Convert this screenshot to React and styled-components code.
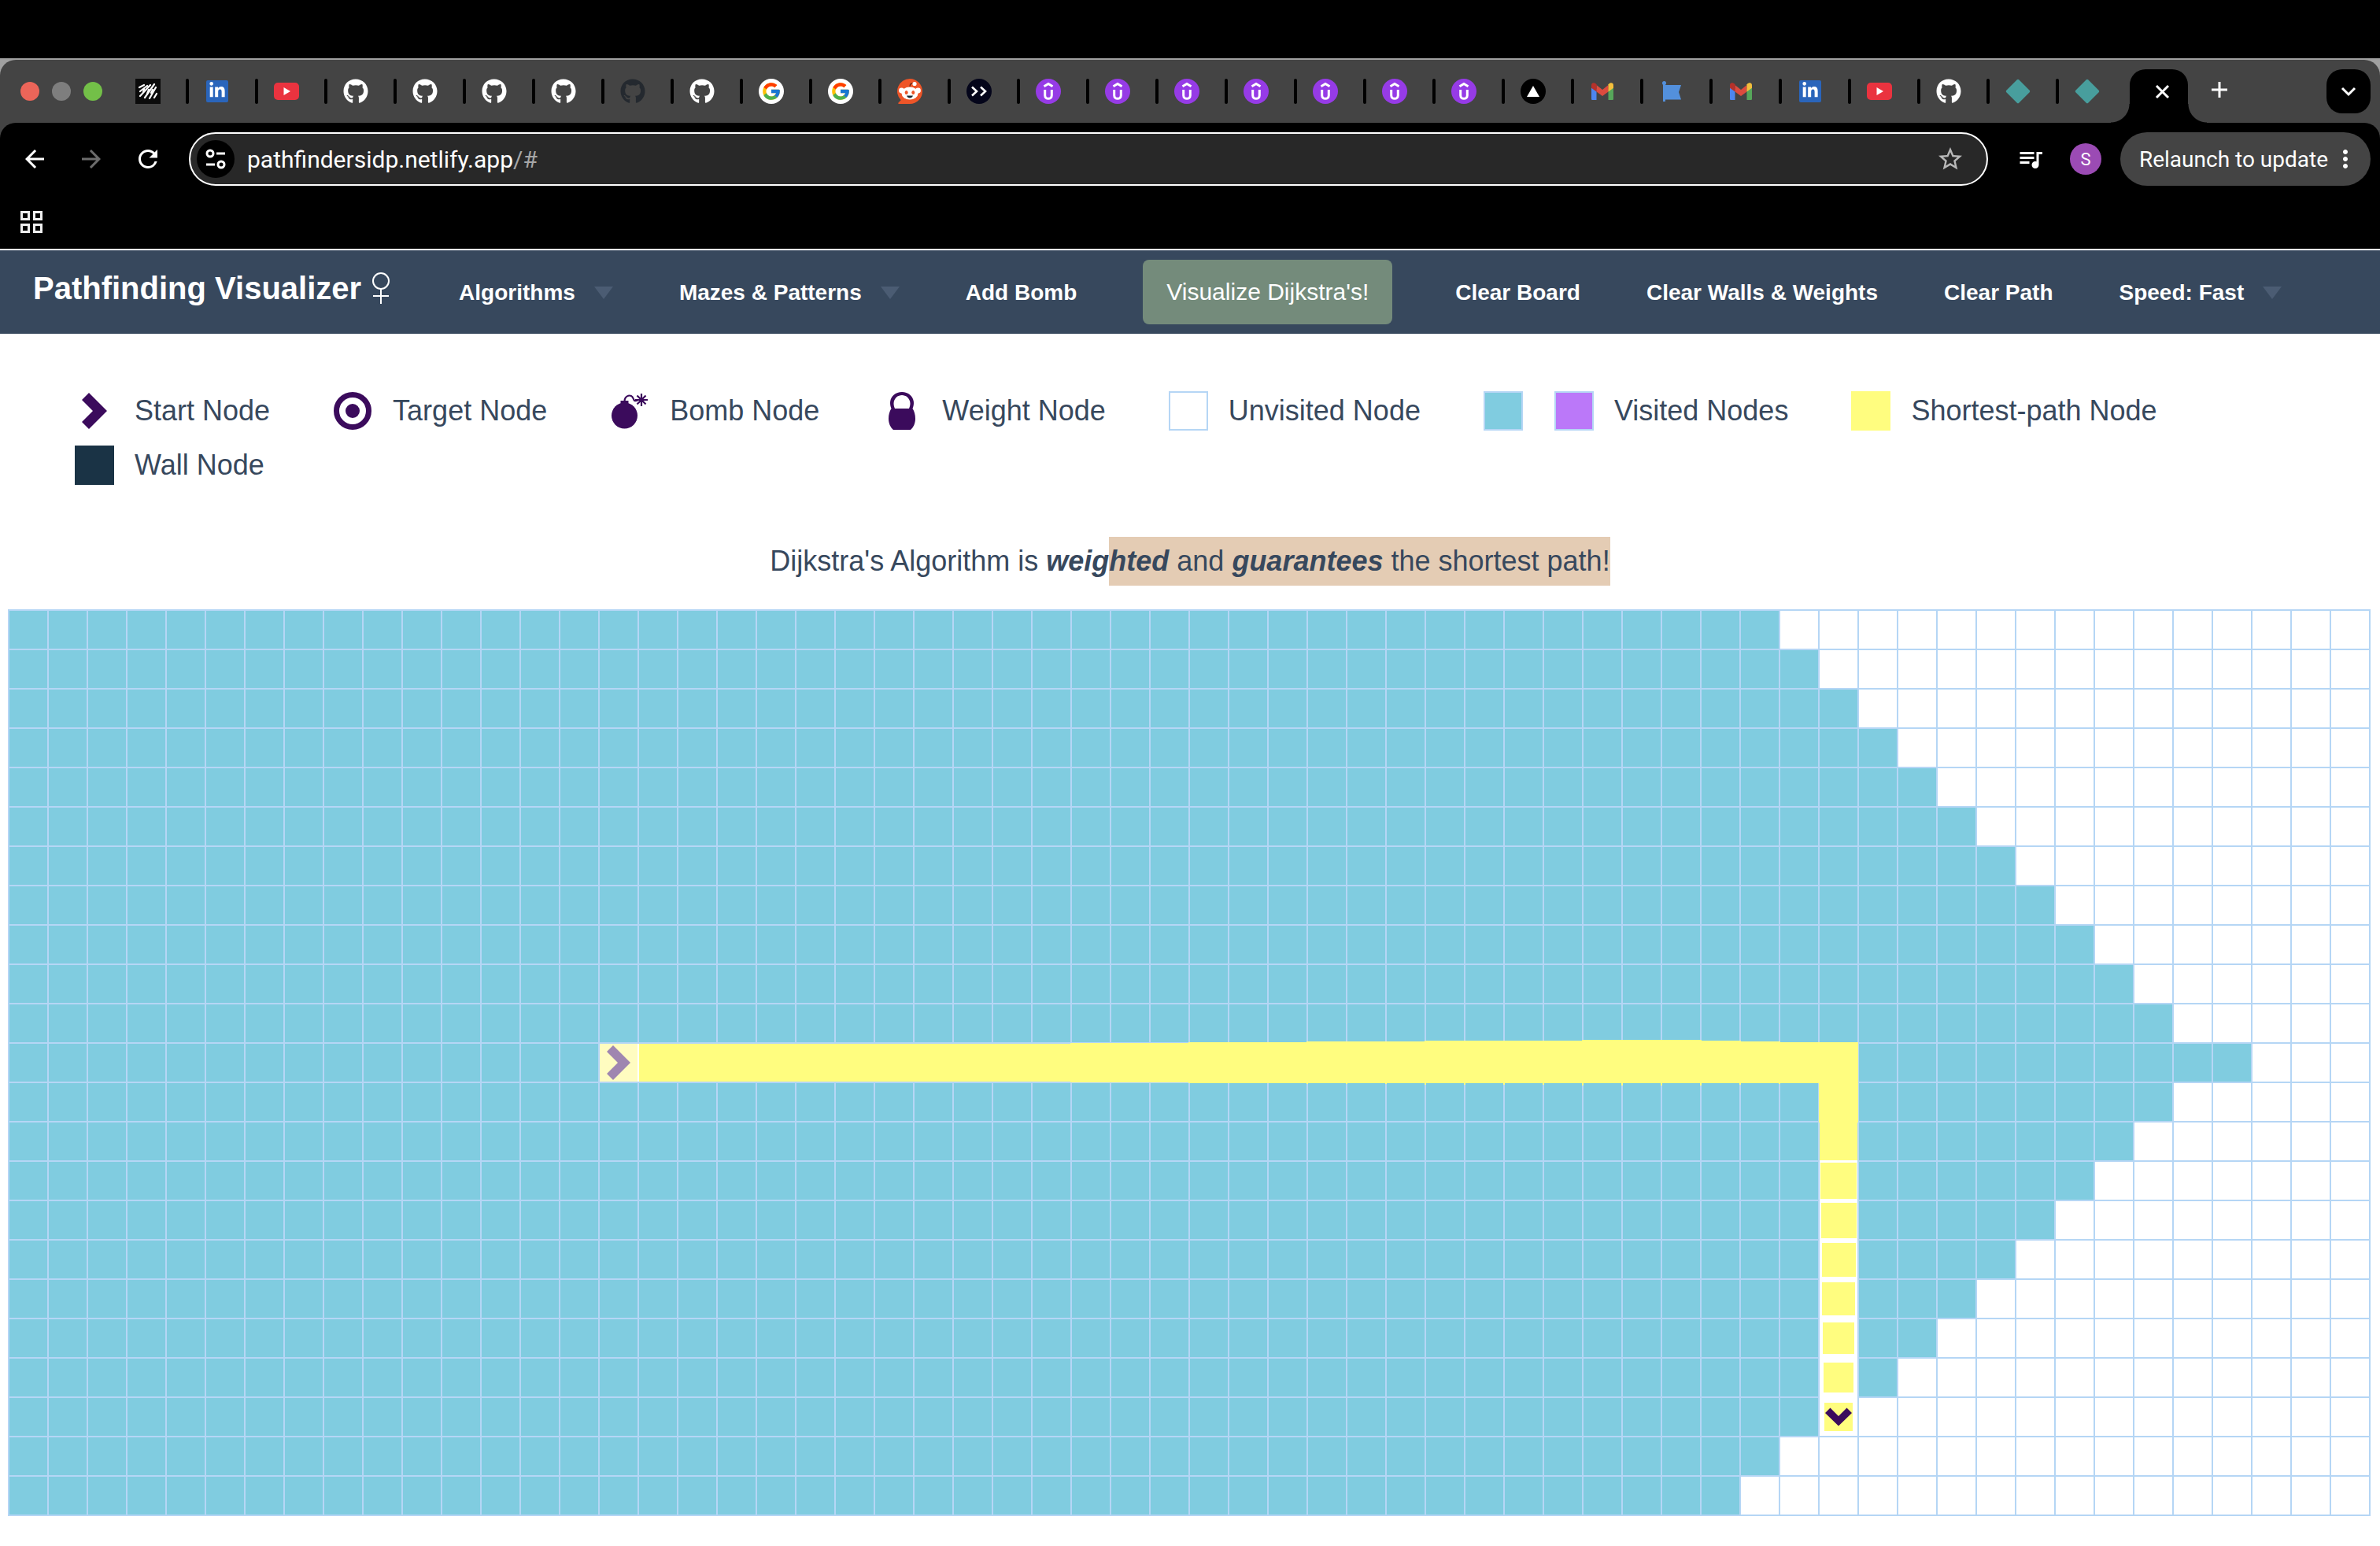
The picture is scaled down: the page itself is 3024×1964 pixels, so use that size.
import React from "react";
import styled, { createGlobalStyle, css } from "styled-components";
import { FaGithub, FaLinkedinIn } from "react-icons/fa";
import { FcGoogle } from "react-icons/fc";
import {
  MdArrowBack,
  MdArrowForward,
  MdRefresh,
  MdStarBorder,
  MdQueueMusic,
  MdMoreVert,
} from "react-icons/md";

const color = {
  strip: "#444444",
  navy: "#37485d",
  ink: "#37485d",
  line: "#b5d6f5",
  visited: "#80cce0",
  visitedAlt: "#bb78f9",
  path: "#fffd7f",
  wall: "#1a3345",
  node: "#3b0b5c",
};

const GlobalStyle = createGlobalStyle`
  *, *::before, *::after { box-sizing: border-box; }
  body {
    margin: 0;
    background: #fff;
    color: ${color.ink};
    font-family: "Liberation Sans", Arial, sans-serif;
  }
  button { font: inherit; color: inherit; background: none; border: 0; padding: 0; cursor: pointer; }
  a { color: inherit; text-decoration: none; }
  svg { display: block; flex: none; }
`;

/* ---------- browser window ---------- */

const Browser = styled.header`
  background: #000;
  padding-top: 74px;
  border-bottom: 2px solid #fff;
  font-family: Roboto, Inter, sans-serif;
`;

const WindowEdge = styled.div`
  background: #a0a0a0;
  padding-top: 2px;
`;

const TabStrip = styled.div`
  display: flex;
  align-items: center;
  height: 80px;
  padding: 0 12px 0 26px;
  background: ${color.strip};
  border-radius: 20px 20px 0 0;
`;

const Lights = styled.div`
  display: flex;
  gap: 16px;
  margin-right: 42px;
`;

const Light = styled.button`
  width: 24px;
  height: 24px;
  border-radius: 50%;
  background: ${(p) => p.$fill};
`;

const Tabs = styled.nav`
  display: flex;
  align-items: center;
  align-self: stretch;
`;

const Tab = styled.a`
  display: flex;
  align-items: center;
  width: 88px;

  &:not(:nth-last-child(2))::after {
    content: "";
    width: 4px;
    height: 32px;
    margin-left: 32px;
    border-radius: 2px;
    background: #000;
  }
`;

const ActiveTab = styled.div`
  position: relative;
  display: flex;
  align-items: center;
  justify-content: flex-end;
  align-self: flex-end;
  width: 74px;
  height: 68px;
  margin-left: -18px;
  padding: 0 18px 12px 0;
  background: #000;
  border-radius: 20px 20px 0 0;

  &::before,
  &::after {
    content: "";
    position: absolute;
    bottom: 0;
    width: 24px;
    height: 24px;
  }
  &::before {
    right: 100%;
    background: radial-gradient(circle at 0 0, transparent 23px, #000 24px);
  }
  &::after {
    left: 100%;
    background: radial-gradient(circle at 100% 0, transparent 23px, #000 24px);
  }
`;

const NewTab = styled.button`
  display: flex;
  margin-left: 28px;
`;

const TabSearch = styled.button`
  display: grid;
  place-items: center;
  width: 56px;
  height: 56px;
  margin-left: auto;
  border-radius: 20px;
  background: #000;
`;

const Disc = styled.span`
  display: grid;
  place-items: center;
  width: 32px;
  height: 32px;
  border-radius: ${(p) => p.$radius || "50%"};
  background: ${(p) => p.$fill};
  color: #fff;
`;

const ToolbarBack = styled.div`
  background: ${color.strip};
`;

const Toolbar = styled.div`
  display: flex;
  align-items: center;
  padding: 12px 12px;
  background: #000;
  border-radius: 20px 20px 0 0;
`;

const NavButtons = styled.div`
  display: flex;
  gap: 36px;
  margin: 0 34px 0 14px;
  color: #fff;
`;

const IconButton = styled.button`
  display: flex;
  color: ${(p) => p.$tint || "#fff"};
`;

const Omnibox = styled.form`
  display: flex;
  align-items: center;
  flex: 1;
  height: 68px;
  padding: 0 28px 0 8px;
  border: 2px solid #fff;
  border-radius: 34px;
  background: #282828;
  font-size: 30px;
`;

const SiteInfo = styled.button`
  display: grid;
  place-items: center;
  width: 48px;
  height: 48px;
  margin-right: 16px;
  border-radius: 50%;
  background: #000;
`;

const Address = styled.input`
  field-sizing: content;
  padding: 0;
  border: 0;
  outline: 0;
  background: none;
  color: #fff;
  font: inherit;
`;

const AddressTail = styled.span`
  flex: 1;
  color: #a6a6a6;
`;

const Extras = styled.div`
  display: flex;
  align-items: center;
  gap: 32px;
  margin: 0 24px 0 36px;
`;

const Avatar = styled.button`
  width: 40px;
  height: 40px;
  border-radius: 50%;
  background: #9b4bb4;
  color: #fff;
  font-size: 22px;
`;

const Relaunch = styled.button`
  display: flex;
  align-items: center;
  gap: 4px;
  height: 68px;
  padding: 0 14px 0 24px;
  border-radius: 34px;
  background: ${color.strip};
  color: #fff;
  font-size: 28px;
  white-space: nowrap;
`;

const Bookmarks = styled.div`
  display: flex;
  align-items: center;
  height: 68px;
  padding: 0 26px;
`;

/* ---------- page ---------- */

const Navbar = styled.nav`
  display: flex;
  align-items: center;
  min-height: 106px;
  padding: 0 42px;
  background: ${color.navy};
  color: #fff;
`;

const Brand = styled.a`
  display: flex;
  align-items: center;
  gap: 14px;
  margin-right: 88px;
  padding-bottom: 10px;
  font-size: 40px;
  line-height: 44px;
  font-weight: 700;
  white-space: nowrap;
`;

const Menu = styled.ul`
  display: flex;
  align-items: center;
  gap: 84px;
  margin: 0;
  padding: 0;
  list-style: none;
  font-size: 28px;
  white-space: nowrap;
`;

const MenuButton = styled.button`
  display: flex;
  align-items: center;
  gap: 24px;
  padding-top: 2px;
  font-weight: 700;
`;

const Caret = styled.span`
  border: solid transparent;
  border-width: 16px 12px 0;
  border-top-color: #4b5c73;
`;

const VisualizeButton = styled.button`
  height: 82px;
  margin-right: -4px;
  padding: 0 30px;
  border-radius: 8px;
  background: #748b7b;
  font-size: 30px;
`;

const Legend = styled.ul`
  display: flex;
  flex-wrap: wrap;
  gap: 19px 80px;
  margin: 0;
  padding: 73px 95px 66px;
  list-style: none;
  font-size: 36px;
`;

const LegendItem = styled.li`
  display: flex;
  align-items: center;
  gap: 26px;
  height: 50px;
  white-space: nowrap;
`;

const Swatches = styled.span`
  display: flex;
  gap: 40px;
`;

const Swatch = styled.span`
  width: 50px;
  height: 50px;
  background: ${(p) => p.$fill};
  ${(p) => p.$outlined && css`border: 2px solid ${color.line};`}
`;

const Description = styled.p`
  margin: 0 0 30px;
  font-size: 36px;
  line-height: 62px;
  text-align: center;

  i { font-weight: 700; }
`;

const Selected = styled.mark`
  padding: 10px 0 11px;
  background: #e4ccb4;
  color: inherit;
`;

const Board = styled.div`
  display: grid;
  grid-template-columns: repeat(60, 48px);
  grid-auto-rows: 48px;
  gap: 2px;
  width: max-content;
  margin: 0 0 36px 10px;
  padding: 2px;
  background: ${color.line};
`;

const cellKinds = {
  open: css`background: #fff;`,
  visited: css`background: ${color.visited};`,
  start: css`background: #fffcc0; box-shadow: 2px 0 0 #fff;`,
  across: css`background: ${color.path};`,
  down: css`background: #fff; box-shadow: 0 -2px 0 #fff;`,
};

const Cell = styled.div`
  display: flex;
  align-items: center;
  justify-content: center;
  ${(p) => cellKinds[p.$kind]}
`;

const PathFill = styled.span`
  display: grid;
  place-items: center;
  flex: none;
  width: ${(p) => p.$w}px;
  height: ${(p) => p.$h}px;
  background: ${color.path};
`;

/* ---------- favicons ---------- */

const Scribble = () => (
  <Disc $fill="#0b0b0b" $radius="0">
    <svg width="24" height="20" viewBox="0 0 24 20" fill="none" stroke="#fff" strokeWidth="2.2" strokeLinecap="round" strokeLinejoin="round">
      <path d="M1 5 7 2M2 10l9-7M2 16 15 2M8 18 20 1M14 19l8-14M20 18l3-5" />
      <path d="M6 11l1-4M11 13l2-5M16 12l2-4" />
    </svg>
  </Disc>
);

const LinkedIn = () => (
  <svg width="32" height="32" viewBox="0 0 32 32">
    <rect x="2" y="2" width="28" height="28" rx="2" fill="#2a65bb" />
    <FaLinkedinIn x="5" y="4" size={22} color="#fff" />
  </svg>
);

const YouTube = () => (
  <svg width="32" height="32" viewBox="0 0 32 32">
    <rect y="5" width="32" height="22" rx="5" fill="#ea333f" />
    <path d="M12.500 11v10l8.500-5z" fill="#fff" />
  </svg>
);

const GitHub = () => <FaGithub size={32} color="#fff" />;
const GitHubDark = () => <FaGithub size={32} color="#24292f" />;

const Google = () => (
  <Disc $fill="#fff">
    <FcGoogle size={26} />
  </Disc>
);

const Reddit = () => (
  <svg width="32" height="32" viewBox="0 0 32 32">
    <path d="M16 0a16 16 0 1 1 0 32H2.500c-1.500 0-1.500-1-.8-1.800L4.700 27.300A16 16 0 0 1 16 0z" fill="#ee5528" />
    <path d="M16 10c.3-4 2-4.500 4.500-4" stroke="#5c2312" strokeWidth="1.200" fill="none" />
    <circle cx="22" cy="6.500" r="2.600" fill="#fff" />
    <circle cx="5.500" cy="15" r="3.400" fill="#fff" />
    <circle cx="26.500" cy="15" r="3.400" fill="#fff" />
    <ellipse cx="16" cy="18.500" rx="10.500" ry="8" fill="#fff" />
    <ellipse cx="11.700" cy="17.500" rx="2" ry="2.500" fill="#ee5528" />
    <ellipse cx="20.300" cy="17.500" rx="2" ry="2.500" fill="#ee5528" />
    <path d="M12 21.500h8c-.6 2-2.200 3-4 3s-3.400-1-4-3z" fill="#1b2a33" />
  </svg>
);

const Fast = () => (
  <Disc $fill="#04051a">
    <svg width="22" height="14" viewBox="0 0 22 14" fill="none" stroke="#fff" strokeWidth="2.600">
      <path d="m2 1.500 6 5.500-6 5.500M13 1.500 19 7l-6 5.500" />
    </svg>
  </Disc>
);

const Udemy = () => (
  <Disc $fill="#963be6">
    <svg width="32" height="32" viewBox="0 0 32 32" fill="none" stroke="#fff" strokeWidth="3">
      <path d="m10.500 9.700 5.500-3.300 5.500 3.300" />
      <path d="M11.700 14v7.200c0 5.400 8.600 5.400 8.600 0V14" />
    </svg>
  </Disc>
);

const Vercel = () => (
  <Disc $fill="#000">
    <svg width="16" height="14" viewBox="0 0 16 14">
      <path d="m8 0 8 14H0z" fill="#fff" />
    </svg>
  </Disc>
);

const Gmail = () => (
  <svg width="32" height="32" viewBox="0 0 32 32">
    <path d="M2 9v16.500c0 1 .6 1.500 1.500 1.500H8.500V13z" fill="#4d86f0" />
    <path d="M30 9v16.500c0 1-.6 1.500-1.500 1.500h-5V13z" fill="#56a65a" />
    <path d="m8.500 8 7.500 6 7.500-6v8.500L16 22l-7.500-5.500z" fill="#dd4b3e" />
    <path d="M2 8.500C2 5 5.500 4.200 8.500 7.200v9.300L2 11.700z" fill="#b5312a" />
    <path d="M30 8.500c0-3.500-3.500-4.300-6.500-1.300v9.300l6.500-4.800z" fill="#f3bf3c" />
  </svg>
);

const Flag = () => (
  <svg width="32" height="32" viewBox="0 0 32 32" fill="#5390dc">
    <circle cx="6.500" cy="5.500" r="2.500" />
    <path d="M5 5h3v24H5z" />
    <path d="M7 8h21l-3 9 3 9.500H7z" />
  </svg>
);

const Netlify = () => (
  <svg width="32" height="32" viewBox="0 0 32 32">
    <path d="m14.800 1.300-13.500 13.500a1.700 1.700 0 0 0 0 2.400l13.500 13.500a1.700 1.700 0 0 0 2.400 0l13.500-13.500a1.700 1.700 0 0 0 0-2.400l-13.500-13.500a1.700 1.700 0 0 0-2.400 0z" fill="#489e9d" />
  </svg>
);

const repeat = (n, item) => Array.from({ length: n }, () => item);

const tabs = [
  ["Notes", Scribble],
  ["LinkedIn", LinkedIn],
  ["YouTube", YouTube],
  ...repeat(4, ["GitHub", GitHub]),
  ["GitHub", GitHubDark],
  ["GitHub", GitHub],
  ...repeat(2, ["Google", Google]),
  ["Reddit", Reddit],
  ["Arrows", Fast],
  ...repeat(7, ["Udemy", Udemy]),
  ["Vercel", Vercel],
  ["Gmail", Gmail],
  ["Flag", Flag],
  ["Gmail", Gmail],
  ["LinkedIn", LinkedIn],
  ["YouTube", YouTube],
  ["GitHub", GitHub],
  ...repeat(2, ["Netlify", Netlify]),
];

/* ---------- node icons ---------- */

const StartIcon = () => (
  <svg width="50" height="50" viewBox="0 0 50 50">
    <path d="M18 2 9 11l14 14L9 39l9 9 23-23z" fill={color.node} />
  </svg>
);

const TargetIcon = () => (
  <svg width="50" height="50" viewBox="0 0 50 50">
    <circle cx="25" cy="25" r="20.500" fill="none" stroke={color.node} strokeWidth="7" />
    <circle cx="25" cy="25" r="9" fill={color.node} />
  </svg>
);

const BombIcon = () => (
  <svg width="50" height="50" viewBox="0 0 50 50" fill={color.node}>
    <circle cx="18.500" cy="31" r="16.500" />
    <path d="M13.500 12h10v6h-10z" />
    <path
      d="M18.500 13c0-8 9-10 11-4 1 3 2 4 6 2.500M32 11h16M40 3v16M34.500 5.500l11 11M45.500 5.500l-11 11"
      fill="none"
      stroke={color.node}
      strokeWidth="2.200"
    />
  </svg>
);

const WeightIcon = () => (
  <svg width="50" height="50" viewBox="0 0 50 50" fill={color.node}>
    <path
      d="M25 1c9 0 15 6.500 15 14 0 3-.8 5-1.500 7 2.300 3.500 3.500 8 3.500 13 0 6-2.500 11-6 14H14c-3.500-3-6-8-6-14 0-5 1.200-9.500 3.500-13-.7-2-1.500-4-1.500-7C10 7.500 16 1 25 1zm0 4c-6 0-10.500 5-10.500 10.500 0 2.500.7 4.500 1.500 6.500h18c.8-2 1.500-4 1.500-6.500C35.500 10 31 5 25 5z"
      fillRule="evenodd"
    />
  </svg>
);

const legend = [
  ["Start Node", <StartIcon />],
  ["Target Node", <TargetIcon />],
  ["Bomb Node", <BombIcon />],
  ["Weight Node", <WeightIcon />],
  ["Unvisited Node", <Swatch $fill="#fff" $outlined />],
  [
    "Visited Nodes",
    <Swatches>
      <Swatch $fill={color.visited} $outlined />
      <Swatch $fill={color.visitedAlt} $outlined />
    </Swatches>,
  ],
  ["Shortest-path Node", <Swatch $fill={color.path} />],
  ["Wall Node", <Swatch $fill={color.wall} />],
];

/* ---------- board ---------- */

// Number of explored cells in each row, counted from the left edge.
const explored = [45, 46, 47, 48, 49, 50, 51, 52, 53, 54, 55, 57, 55, 54, 53, 52, 51, 50, 49, 48, 46, 45, 44];

const START = { row: 11, col: 15 };
const TURN_COL = 46;
const END_ROW = 20;

// Sizes of the growing path cells, frozen in the middle of their animation.
const downSizes = [50, 48, 46, 45, 43, 42, 40, 38, 36];

const acrossHeight = (col) => {
  if (col < 27) return 48;
  if (col < 30) return 50;
  if (col < 33) return 52;
  if (col < 36) return 54;
  if (col < 40) return 56;
  if (col < 43) return 58;
  if (col < 44) return 56;
  if (col < 45) return 54;
  return 52;
};

const renderCell = (row, col) => {
  const key = `${row}-${col}`;
  if (row === START.row && col === START.col) {
    return (
      <Cell key={key} $kind="start">
        <svg width="48" height="48" viewBox="0 0 48 48">
          <path d="m17 2-8 8 14 14L9 38l8 8 22-22z" fill="#9f86b0" />
        </svg>
      </Cell>
    );
  }
  if (row === START.row && col > START.col && col <= TURN_COL) {
    const corner = col === TURN_COL;
    return (
      <Cell key={key} $kind="across">
        <PathFill $w={col === START.col + 1 ? 48 : corner ? 50 : 52} $h={acrossHeight(col)} />
      </Cell>
    );
  }
  if (col === TURN_COL && row > START.row && row <= END_ROW) {
    const size = downSizes[row - START.row - 1];
    return (
      <Cell key={key} $kind="down">
        <PathFill $w={size} $h={size > 46 ? 52 : size}>
          {row === END_ROW && (
            <svg width="34" height="24" viewBox="0 0 34 24">
              <path d="M0 7 6.500 0.500 17 11 27.500 0.500 34 7 17 23.500z" fill={color.node} />
            </svg>
          )}
        </PathFill>
      </Cell>
    );
  }
  return <Cell key={key} $kind={col < explored[row] ? "visited" : "open"} />;
};

export default function App() {
  return (
    <>
      <GlobalStyle />
      <Browser>
        <WindowEdge>
          <TabStrip>
            <Lights>
              <Light $fill="#ec6559" aria-label="Close window" />
              <Light $fill="#7e7e7e" aria-label="Minimize window" />
              <Light $fill="#73c048" aria-label="Zoom window" />
            </Lights>
            <Tabs aria-label="Tabs">
              {tabs.map(([name, Icon], i) => (
                <Tab key={i} href="#" aria-label={name}>
                  <Icon />
                </Tab>
              ))}
              <ActiveTab>
                <IconButton aria-label="Close tab">
                  <svg width="30" height="30" viewBox="0 0 30 30" stroke="#fff" strokeWidth="3">
                    <path d="m8 8 15 15M23 8 8 23" />
                  </svg>
                </IconButton>
              </ActiveTab>
            </Tabs>
            <NewTab aria-label="New tab">
              <svg width="24" height="24" viewBox="0 0 24 24" stroke="#fff" strokeWidth="3">
                <path d="M12 0v20M2 10h20" />
              </svg>
            </NewTab>
            <TabSearch aria-label="Search tabs">
              <svg width="20" height="14" viewBox="0 0 20 14" fill="none" stroke="#fff" strokeWidth="3">
                <path d="m2 3 8 8 8-8" />
              </svg>
            </TabSearch>
          </TabStrip>
        </WindowEdge>
        <ToolbarBack>
          <Toolbar>
            <NavButtons>
              <IconButton aria-label="Back"><MdArrowBack size={36} /></IconButton>
              <IconButton aria-label="Forward" $tint="#6c6c6c"><MdArrowForward size={36} /></IconButton>
              <IconButton aria-label="Reload"><MdRefresh size={36} /></IconButton>
            </NavButtons>
            <Omnibox>
              <SiteInfo type="button" aria-label="Site information">
                <svg width="26" height="26" viewBox="0 0 26 26" fill="none" stroke="#fff" strokeWidth="3">
                  <circle cx="6" cy="6" r="4" />
                  <path d="M14 6h11M1 20h11" />
                  <circle cx="20" cy="20" r="4" />
                </svg>
              </SiteInfo>
              <Address aria-label="Address" defaultValue="pathfindersidp.netlify.app" />
              <AddressTail>/#</AddressTail>
              <IconButton type="button" aria-label="Bookmark this tab" $tint="#b8b8b8">
                <MdStarBorder size={36} />
              </IconButton>
            </Omnibox>
            <Extras>
              <IconButton aria-label="Media controls"><MdQueueMusic size={36} /></IconButton>
              <Avatar>S</Avatar>
            </Extras>
            <Relaunch>
              Relaunch to update
              <MdMoreVert size={36} />
            </Relaunch>
          </Toolbar>
        </ToolbarBack>
        <Bookmarks>
          <IconButton aria-label="Apps">
            <svg width="28" height="28" viewBox="0 0 28 28" fill="none" stroke="#eee" strokeWidth="3">
              <path d="M1.500 1.500h9v9h-9zM17.500 1.500h9v9h-9zM1.500 17.500h9v9h-9zM17.500 17.500h9v9h-9z" />
            </svg>
          </IconButton>
        </Bookmarks>
      </Browser>

      <Navbar>
        <Brand href="#">
          Pathfinding Visualizer
          <svg width="22" height="40" viewBox="0 0 22 40" fill="none" stroke="#fff" strokeWidth="2">
            <circle cx="11" cy="11" r="10" />
            <path d="M11 21v19M1 30h20" />
          </svg>
        </Brand>
        <Menu>
          <li><MenuButton>Algorithms<Caret /></MenuButton></li>
          <li><MenuButton>Mazes &amp; Patterns<Caret /></MenuButton></li>
          <li><MenuButton>Add Bomb</MenuButton></li>
          <li><VisualizeButton>Visualize Dijkstra's!</VisualizeButton></li>
          <li><MenuButton>Clear Board</MenuButton></li>
          <li><MenuButton>Clear Walls &amp; Weights</MenuButton></li>
          <li><MenuButton>Clear Path</MenuButton></li>
          <li><MenuButton>Speed: Fast<Caret /></MenuButton></li>
        </Menu>
      </Navbar>

      <main>
        <Legend>
          {legend.map(([label, icon]) => (
            <LegendItem key={label}>
              {icon}
              {label}
            </LegendItem>
          ))}
        </Legend>
        <Description>
          Dijkstra's Algorithm is <i>weig</i>
          <Selected>
            <i>hted</i> and <i>guarantees</i> the shortest path!
          </Selected>
        </Description>
        <Board>
          {explored.flatMap((_, row) => Array.from({ length: 60 }, (_, col) => renderCell(row, col)))}
        </Board>
      </main>
    </>
  );
}
